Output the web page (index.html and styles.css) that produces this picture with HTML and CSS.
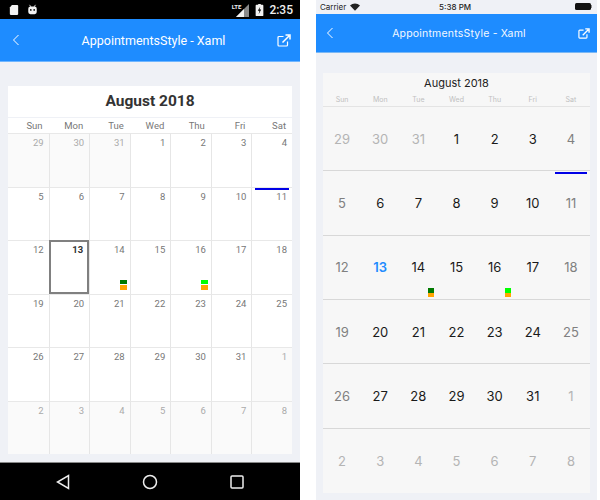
FILE: index.html
```html
<!DOCTYPE html>
<html lang="en">
<head>
    <meta charset="UTF-8">
    <title>AppointmentsStyle - Xaml</title>
    <link rel="stylesheet" href="styles.css">
</head>
<body>

    <!-- Android phone -->
    <div class="phone android">
        <div class="status">
            <div class="status-left">
                <svg width="10" height="11" viewBox="0 0 12 13"><path d="M3.500 1H10a1 1 0 0 1 1 1v10a1 1 0 0 1-1 1H2a1 1 0 0 1-1-1V4z" fill="#f2f2f2"/></svg>
                <svg width="11" height="11" viewBox="0 0 13 13"><path d="M3 1l1.600 2.400M10 1L8.400 3.400" stroke="#f2f2f2" stroke-width="1"/><rect x="1.500" y="3" width="10" height="9" rx="2.500" fill="#f2f2f2"/><circle cx="4.500" cy="7" r="1" fill="#000"/><circle cx="8.500" cy="7" r="1" fill="#000"/></svg>
            </div>
            <div class="status-right">
                <span class="lte">LTE</span>
                <svg width="14" height="14" viewBox="0 0 14 14"><path d="M14 1V14H1z" fill="#8a8a8a"/><path d="M9 6V14H1z" fill="#f2f2f2"/></svg>
                <svg class="battery" width="9" height="12" viewBox="0 0 9 14"><path d="M3 0h3v1h2a1 1 0 0 1 1 1v11a1 1 0 0 1-1 1H1a1 1 0 0 1-1-1V2a1 1 0 0 1 1-1h2z" fill="#f2f2f2"/><path d="M5.500 3L2.500 8h2L3.500 12l3-5.500h-2z" fill="#000"/></svg>
                <span class="clock">2:35</span>
            </div>
        </div>
        <div class="appbar">
            <svg class="back" width="8" height="12" viewBox="0 0 8 12"><path d="M6.500 1L1.500 6l5 5" fill="none" stroke="#fff" stroke-width="1"/></svg>
            <span class="appbar-title">AppointmentsStyle - Xaml</span>
            <svg class="share" width="14" height="13" viewBox="0 0 14 13"><path d="M6.500 2.500H2a1 1 0 0 0-1 1V11a1 1 0 0 0 1 1h7.500a1 1 0 0 0 1-1V7.500" fill="none" stroke="#fff" stroke-width="1.200"/><path d="M5.500 8.500L12 2M8.500 1H13v4.500" fill="none" stroke="#fff" stroke-width="1.500"/></svg>
        </div>
        <div class="content">
            <div class="calendar">
                <div class="cal-title">August 2018</div>
                <div class="weekdays">
                    <span>Sun</span><span>Mon</span><span>Tue</span><span>Wed</span><span>Thu</span><span>Fri</span><span>Sat</span>
                </div>
                <div class="grid">
                    <div class="day other">29</div><div class="day other">30</div><div class="day other">31</div><div class="day">1</div><div class="day">2</div><div class="day">3</div><div class="day">4</div>
                    <div class="day">5</div><div class="day">6</div><div class="day">7</div><div class="day">8</div><div class="day">9</div><div class="day">10</div><div class="day">11<i class="line"></i></div>
                    <div class="day">12</div><div class="day today">13</div><div class="day">14<i class="marks"><b class="dark"></b><b class="orange"></b></i></div><div class="day">15</div><div class="day">16<i class="marks"><b class="lime"></b><b class="orange"></b></i></div><div class="day">17</div><div class="day">18</div>
                    <div class="day">19</div><div class="day">20</div><div class="day">21</div><div class="day">22</div><div class="day">23</div><div class="day">24</div><div class="day">25</div>
                    <div class="day">26</div><div class="day">27</div><div class="day">28</div><div class="day">29</div><div class="day">30</div><div class="day">31</div><div class="day other">1</div>
                    <div class="day other">2</div><div class="day other">3</div><div class="day other">4</div><div class="day other">5</div><div class="day other">6</div><div class="day other">7</div><div class="day other">8</div>
                </div>
            </div>
        </div>
        <div class="navbar">
            <svg width="14" height="16" viewBox="0 0 14 16"><path d="M12.500 1.500V14.500L1.500 8z" fill="none" stroke="#eee" stroke-width="1.500"/></svg>
            <svg width="16" height="16" viewBox="0 0 16 16"><circle cx="8" cy="8" r="6.500" fill="none" stroke="#eee" stroke-width="1.500"/></svg>
            <svg width="14" height="14" viewBox="0 0 14 14"><rect x="1" y="1" width="12" height="12" rx="1" fill="none" stroke="#eee" stroke-width="1.500"/></svg>
        </div>
    </div>

    <!-- iOS phone -->
    <div class="phone ios">
        <div class="status">
            <div class="carrier">
                <span>Carrier</span>
                <svg width="10" height="8" viewBox="0 0 11 8"><path d="M5.500 8L0 2.400a8 8 0 0 1 11 0z" fill="#222"/></svg>
            </div>
            <span class="clock">5:38 PM</span>
            <svg class="battery" width="17" height="7" viewBox="0 0 17 7"><rect width="16" height="7" rx="1.500" fill="#111"/><rect x="16" y="2" width="1" height="3" fill="#888"/></svg>
        </div>
        <div class="appbar">
            <svg class="back" width="8" height="12" viewBox="0 0 8 12"><path d="M6.500 1L1.500 6l5 5" fill="none" stroke="#fff" stroke-width="1"/></svg>
            <span class="appbar-title">AppointmentsStyle - Xaml</span>
            <svg class="share" width="12" height="11" viewBox="0 0 14 13"><path d="M6.500 2.500H2a1 1 0 0 0-1 1V11a1 1 0 0 0 1 1h7.500a1 1 0 0 0 1-1V7.500" fill="none" stroke="#fff" stroke-width="1.400"/><path d="M5.500 8.500L12 2M8.500 1H13v4.500" fill="none" stroke="#fff" stroke-width="1.600"/></svg>
        </div>
        <div class="content">
            <div class="calendar">
                <div class="cal-title">August 2018</div>
                <div class="weekdays">
                    <span>Sun</span><span>Mon</span><span>Tue</span><span>Wed</span><span>Thu</span><span>Fri</span><span>Sat</span>
                </div>
                <div class="grid">
                    <div class="day other">29</div><div class="day other">30</div><div class="day other">31</div><div class="day">1</div><div class="day">2</div><div class="day">3</div><div class="day weekend">4</div>
                    <div class="day weekend">5</div><div class="day">6</div><div class="day">7</div><div class="day">8</div><div class="day">9</div><div class="day">10</div><div class="day weekend">11<i class="line"></i></div>
                    <div class="day weekend">12</div><div class="day today">13</div><div class="day">14<i class="marks"><b class="dark"></b><b class="orange"></b></i></div><div class="day">15</div><div class="day">16<i class="marks"><b class="lime"></b><b class="orange"></b></i></div><div class="day">17</div><div class="day weekend">18</div>
                    <div class="day weekend">19</div><div class="day">20</div><div class="day">21</div><div class="day">22</div><div class="day">23</div><div class="day">24</div><div class="day weekend">25</div>
                    <div class="day weekend">26</div><div class="day">27</div><div class="day">28</div><div class="day">29</div><div class="day">30</div><div class="day">31</div><div class="day other">1</div>
                    <div class="day other">2</div><div class="day other">3</div><div class="day other">4</div><div class="day other">5</div><div class="day other">6</div><div class="day other">7</div><div class="day other">8</div>
                </div>
            </div>
        </div>
    </div>

</body>
</html>
```

FILE: styles.css
```css
body {
    margin: 0;
    width: 600px;
    height: 500px;
    overflow: hidden;
    display: flex;
    gap: 16px;
    background-color: #fff;
}

.phone {
    height: 500px;
    display: flex;
    flex-direction: column;
    background-color: #eff1f6;
}

.appbar {
    display: flex;
    align-items: center;
    justify-content: space-between;
    background-color: #1e8cff;
    color: #fff;
    box-sizing: border-box;
}

.content {
    flex: 1;
    min-height: 0;
}

.calendar {
    display: flex;
    flex-direction: column;
}

.weekdays {
    display: grid;
    grid-template-columns: repeat(7, 1fr);
}

.grid {
    display: grid;
    grid-template-columns: repeat(7, 1fr);
    grid-template-rows: repeat(6, 1fr);
}

.day {
    position: relative;
    box-sizing: border-box;
}

.line {
    position: absolute;
    background-color: #0000e6;
    height: 2px;
}

.marks {
    position: absolute;
    display: flex;
    flex-direction: column;
}

.marks b {
    display: block;
}

.dark { background-color: #007a00; }
.lime { background-color: #00ff00; }
.orange { background-color: #ffa500; }

/* Android side */
.android {
    width: 300px;
    font-family: Roboto, sans-serif;
}

.android .status {
    height: 19px;
    background-color: #000;
    display: flex;
    align-items: center;
    justify-content: space-between;
    padding: 0 7px 0 9px;
}

.status-left, .status-right {
    display: flex;
    align-items: center;
}

.status-left { gap: 8px; }

.lte {
    font-size: 6px;
    font-weight: 700;
    color: #eee;
    margin-right: -6px;
    margin-bottom: 7px;
}

.android .battery { margin-left: 6px; }

.android .clock {
    color: #eee;
    font-size: 12px;
    font-weight: 500;
    margin-left: 5px;
}

.android .appbar {
    height: 43px;
    padding: 0 9px 0 12px;
    border-bottom: 1px solid #6fb6ff;
}

.android .appbar-title {
    font-size: 12.500px;
    margin-left: 10px;
}

.android .content { padding: 24px 8px 7px; }

.android .calendar { height: 368px; }

.android .cal-title {
    height: 31px;
    line-height: 31px;
    background-color: #fff;
    text-align: center;
    font-size: 15.500px;
    font-weight: 700;
    color: #333;
}

.android .weekdays {
    height: 15px;
    margin-top: 1px;
    background-color: #fff;
    font-size: 9.500px;
    line-height: 15px;
    color: #777;
    text-align: right;
}

.android .weekdays span { padding-right: 6px; }

.android .grid {
    flex: 1;
    background-color: #fff;
}

.android .day {
    border-left: 1px solid #e6e6e6;
    border-top: 1px solid #e8e8e8;
    padding: 3px 5px 0 0;
    text-align: right;
    font-size: 9.500px;
    color: #777;
}

.android .day:nth-child(7n+1) { border-left: none; }

.android .day.other {
    background-color: #fafafa;
    color: #aaa;
}

.android .day.today {
    border: 2px solid #808080;
    padding: 2px 4px 0 0;
    font-weight: 700;
    color: #333;
}

.android .line {
    left: 3px;
    right: 3px;
    top: 0;
}

.android .marks {
    right: 3px;
    bottom: 4px;
    gap: 1px;
}

.android .marks b {
    width: 7px;
    height: 4.500px;
}

/* iOS side */
.ios {
    width: 281px;
    font-family: Inter, sans-serif;
}

.ios .status {
    height: 13px;
    display: flex;
    align-items: center;
    justify-content: space-between;
    padding: 0 5px 0 4px;
    font-size: 8px;
    color: #222;
}

.carrier {
    display: flex;
    align-items: center;
    gap: 4px;
}

.ios .clock {
    font-weight: 500;
    margin-right: 25px;
}

.ios .appbar {
    height: 39px;
    margin-top: 1px;
    padding: 0 7px 0 10px;
    border-bottom: 1px solid #7ab8f5;
}

.ios .appbar-title {
    font-size: 10.500px;
    letter-spacing: 0.200px;
    margin-left: 6px;
    opacity: 0.95;
}

.ios .content { padding: 20px 7px 8px; }

.ios .calendar {
    height: 420px;
    background-color: #f7f7f7;
}

.ios .cal-title {
    height: 21px;
    line-height: 21px;
    text-align: center;
    font-size: 11px;
    color: #222;
}

.ios .weekdays {
    height: 12px;
    line-height: 12px;
    font-size: 7px;
    color: #c0c0c0;
    text-align: center;
    border-bottom: 1px solid #e4e4e4;
}

.ios .grid { flex: 1; }

.ios .day {
    border-bottom: 1px solid #d8d8d8;
    display: flex;
    align-items: center;
    justify-content: center;
    font-size: 13px;
    color: #1a1a1a;
}

.ios .day:nth-last-child(-n+7) { border-bottom: none; }

.ios .day.weekend { color: #808080; }
.ios .day.other { color: #b4b4b4; }

.ios .day.today {
    color: #1e8cff;
    font-weight: 600;
}

.ios .line {
    left: 3px;
    right: 3px;
    top: 1px;
}

.ios .marks {
    left: 29px;
    bottom: 2px;
}

.ios .marks b {
    width: 6px;
    height: 4.500px;
}

.navbar {
    height: 38px;
    background-color: #000;
    border-top: 1px solid #888;
    box-sizing: border-box;
    display: flex;
    align-items: center;
    justify-content: space-between;
    padding: 0 56px;
}
```
